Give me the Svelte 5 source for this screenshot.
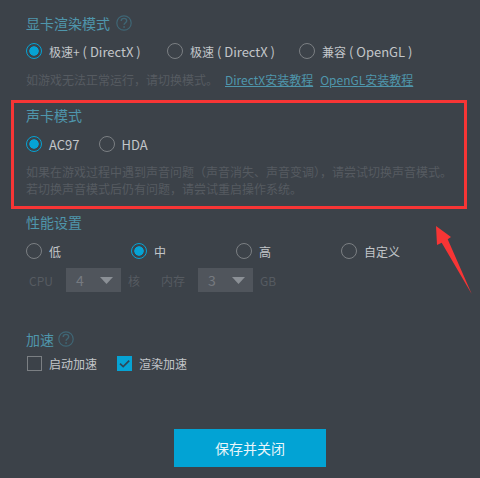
<script lang="ts">
  const gpuModes = [
    { name: '极速+', api: 'DirectX' },
    { name: '极速', api: 'DirectX' },
    { name: '兼容', api: 'OpenGL' }
  ];
  const soundModes = ['AC97', 'HDA'];
  const perfModes = ['低', '中', '高', '自定义'];
  let gpu = $state(0);
  let sound = $state(0);
  let perf = $state(1);
  let boot = $state(false);
  let render = $state(true);
</script>

{#snippet help()}
  <svg class="help" width="16" height="16" viewBox="0 0 16 16" aria-hidden="true">
    <circle cx="8" cy="8" r="7.2" fill="none" stroke="#3f6675" stroke-width="1.2" />
    <path d="M5.2 6c0-1.6 1.2-2.6 2.8-2.6s2.7 1 2.7 2.3c0 1.1-.7 1.6-1.4 2.1-.8.5-1.2 1-1.2 2" fill="none" stroke="#3f6675" stroke-width="1.4" />
    <rect x="7.3" y="11.2" width="1.6" height="1.6" fill="#3f6675" />
  </svg>
{/snippet}

{#snippet caret()}
  <svg width="13" height="7" viewBox="0 0 13 7" aria-hidden="true"><path d="M0 0h13L6.5 7z" fill="#8b9096" /></svg>
{/snippet}

<main class="panel">
  <section class="gpu">
    <h3>显卡渲染模式 {@render help()}</h3>
    <div class="radios gpu-radios">
      {#each gpuModes as mode, i}
        <button type="button" class="radio" class:on={gpu === i} onclick={() => (gpu = i)}>
          <i></i><span><em>{mode.name}</em> ( {mode.api} )</span>
        </button>
      {/each}
    </div>
    <p class="note first">
      <span>如游戏无法正常运行，请切换模式。</span>
      <a href="#dx">DirectX安装教程</a>
      <a href="#gl">OpenGL安装教程</a>
    </p>
  </section>

  <section class="sound">
    <h3>声卡模式</h3>
    <div class="radios sound-radios">
      {#each soundModes as mode, i}
        <button type="button" class="radio" class:on={sound === i} onclick={() => (sound = i)}>
          <i></i><span>{mode}</span>
        </button>
      {/each}
    </div>
    <p class="note">如果在游戏过程中遇到声音问题（声音消失、声音变调），请尝试切换声音模式。<br />若切换声音模式后仍有问题，请尝试重启操作系统。</p>
  </section>

  <section class="perf">
    <h3>性能设置</h3>
    <div class="radios perf-radios">
      {#each perfModes as mode, i}
        <button type="button" class="radio" class:on={perf === i} onclick={() => (perf = i)}>
          <i></i><span>{mode}</span>
        </button>
      {/each}
    </div>
    <div class="specs">
      <span class="cpu">CPU</span>
      <div class="select"><b>4</b>{@render caret()}</div>
      <span class="unit">核</span>
      <span class="mem">内存</span>
      <div class="select"><b>3</b>{@render caret()}</div>
      <span class="unit">GB</span>
    </div>
  </section>

  <section class="boost">
    <h3>加速 {@render help()}</h3>
    <div class="checks">
      <button type="button" class="check" class:on={boot} onclick={() => (boot = !boot)}>
        <i></i><span>启动加速</span>
      </button>
      <button type="button" class="check" class:on={render} onclick={() => (render = !render)}>
        <i>
          {#if render}
            <svg width="15" height="15" viewBox="0 0 15 15" aria-hidden="true"><path d="M3 7.6l3.2 3 6-6" fill="none" stroke="#2f4656" stroke-width="1.7" /></svg>
          {/if}
        </i><span>渲染加速</span>
      </button>
    </div>
  </section>

  <div class="actions"><button type="button" class="save">保存并关闭</button></div>

  <!-- annotation drawn on top of the screenshot -->
  <div class="mark-box"></div>
  <svg class="mark-arrow" width="40" height="72" viewBox="0 0 40 72" aria-hidden="true">
    <path d="M3 2L18 13L14.7 15.3L38.7 70L8.7 18.7L4 21z" fill="#f73535" />
  </svg>
</main>

<style>
  :global(body) { margin: 0; background: #3c4249; }
  .panel {
    position: relative;
    box-sizing: border-box;
    width: 480px;
    height: 478px;
    padding: 0 26px;
    overflow: hidden;
    background: #3c4249;
    font-family: "Noto Sans CJK SC", "Noto Sans", sans-serif;
    font-size: 13px;
    color: #c3c6c9;
  }
  h3 {
    display: flex;
    align-items: center;
    gap: 6px;
    height: 20px;
    margin: 0;
    font-size: 14px;
    font-weight: 400;
    color: #4f96ac;
  }
  .gpu { padding-top: 13px; }
  .sound { padding-top: 17px; }
  .perf { padding-top: 15px; }
  .boost { padding-top: 37px; }
  .boost h3 { gap: 4px; }
  .radios { display: flex; margin-top: 8px; height: 20px; align-items: center; }
  .gpu-radios .radio { width: 141px; }
  .gpu-radios .radio:nth-child(2) { width: 132px; }
  .sound-radios { gap: 19px; margin-top: 9px; }
  .perf-radios { margin-top: 9px; font-size: 12px; }
  .perf-radios .radio { width: 105px; }
  button { padding: 0; border: 0; background: none; color: inherit; font: inherit; cursor: pointer; }
  .radio { display: flex; align-items: center; gap: 7px; white-space: nowrap; }
  .radio em { font-size: 12px; font-style: normal; }
  .radio i {
    box-sizing: border-box;
    flex: none;
    width: 16px;
    height: 16px;
    border: 1px solid #7b7f83;
    border-radius: 50%;
  }
  .radio.on i {
    border-color: #06a3d4;
    background: radial-gradient(circle, #06a3d4 0 4.4px, transparent 5px);
  }
  .note {
    margin: 10px 0 0;
    font-size: 12px;
    line-height: 17px;
    color: #565b61;
  }
  .note.first { display: flex; height: 17px; white-space: nowrap; }
  .note.first a { color: #4f96ac; margin-left: 7px; }
  .sound .note { margin-top: 9px; white-space: nowrap; }
  .specs {
    display: flex;
    align-items: center;
    height: 24px;
    margin-top: 7px;
    font-size: 12px;
    color: #565b61;
  }
  .cpu { margin-left: 3px; width: 37px; }
  .unit { margin-left: 7px; }
  .mem { margin-left: 21px; width: 37px; }
  .select {
    display: flex;
    align-items: center;
    justify-content: space-between;
    box-sizing: border-box;
    width: 55px;
    height: 24px;
    padding: 0 8px 0 10px;
    background: #50555c;
  }
  .select b { font-size: 14px; font-weight: 400; color: #767a80; }
  .checks { display: flex; gap: 19px; margin-top: 5px; font-size: 12px; }
  .check { display: flex; align-items: center; gap: 7px; height: 18px; }
  .check i {
    box-sizing: border-box;
    display: flex;
    flex: none;
    width: 15px;
    height: 15px;
    margin-left: 1px;
    border: 1px solid #7b7f83;
  }
  .check.on i { border: 0; background: #06a3d4; }
  .actions { display: flex; margin: 57px 0 0 148px; }
  .save {
    width: 152px;
    height: 38px;
    background: #02a3d4;
    color: #eaf6fa;
    font-size: 14px;
  }
  .mark-box {
    position: absolute;
    left: 11px;
    top: 100px;
    box-sizing: border-box;
    width: 456px;
    height: 109px;
    border: 3px solid #f73535;
  }
  .mark-arrow { position: absolute; left: 433px; top: 224px; }
</style>
